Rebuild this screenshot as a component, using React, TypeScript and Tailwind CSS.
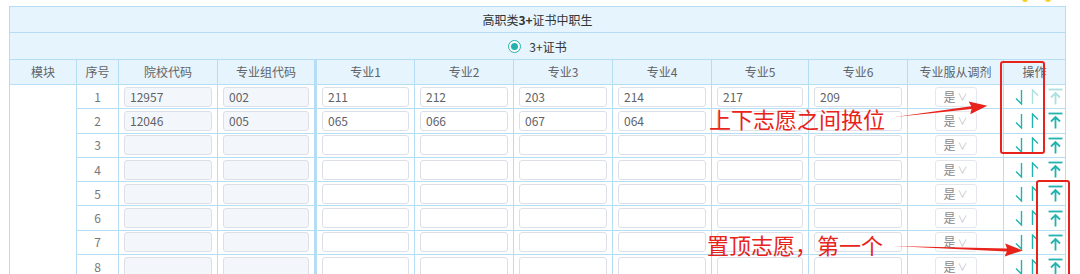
import React from "react";

const rows = [
  { school: "12957", group: "002", majors: ["211", "212", "203", "214", "217", "209"] },
  { school: "12046", group: "005", majors: ["065", "066", "067", "064", "", ""] },
  { school: "", group: "", majors: ["", "", "", "", "", ""] },
  { school: "", group: "", majors: ["", "", "", "", "", ""] },
  { school: "", group: "", majors: ["", "", "", "", "", ""] },
  { school: "", group: "", majors: ["", "", "", "", "", ""] },
  { school: "", group: "", majors: ["", "", "", "", "", ""] },
  { school: "", group: "", majors: ["", "", "", "", "", ""] },
];

const majorHeads = ["专业1", "专业2", "专业3", "专业4", "专业5", "专业6"];

function Field({ value, gray }: { value: string; gray?: boolean }) {
  return (
    <div
      className={
        "mx-auto h-[20px] w-full rounded-[3px] border border-[#dcdfe6] px-[5px] text-left text-[12px] leading-[18px] text-[#606266] " +
        (gray ? "bg-[#f3f7fb]" : "bg-white")
      }
    >
      {value}
    </div>
  );
}

function DownIcon({ faded }: { faded?: boolean }) {
  return (
    <svg width="10" height="16" viewBox="0 0 10 16" fill="none" stroke={faded ? "#a9e2df" : "#23b3ae"} strokeWidth="1.4">
      <path d="M7.5 1 V15 L2 9.5" />
    </svg>
  );
}

function UpIcon({ faded }: { faded?: boolean }) {
  return (
    <svg width="10" height="16" viewBox="0 0 10 16" fill="none" stroke={faded ? "#a9e2df" : "#23b3ae"} strokeWidth="1.4">
      <path d="M2.5 15 V1 L8 6.5" />
    </svg>
  );
}

function TopIcon({ faded }: { faded?: boolean }) {
  return (
    <svg width="15" height="17" viewBox="0 0 15 17" fill="none" stroke={faded ? "#a9e2df" : "#23b3ae"} strokeWidth="1.8">
      <path d="M0.5 1.5 H14.5" />
      <path d="M7.5 5 V16.5 M3 9.5 L7.5 5 L12 9.5" />
    </svg>
  );
}

function Arrow({ width }: { width: number }) {
  return (
    <svg width={width} height="16" viewBox={`0 0 ${width} 16`}>
      <polygon points={`0,8 ${width - 16},6.6 ${width - 18},1.5 ${width},8 ${width - 18},14.5 ${width - 16},9.4`} fill="#e8231b" />
    </svg>
  );
}

export default function App() {
  const cell = "border border-[#b5ddf3]";
  return (
    <div
      className="relative h-[274px] w-[1080px] overflow-hidden bg-white"
      style={{ fontFamily: '"Noto Sans CJK SC", "Noto Sans", sans-serif' }}
    >
      <div className="absolute left-[1022px] top-[-4px] h-[6px] w-[6px] rounded-full bg-[#f5d020]" />
      <div className="absolute left-[1045px] top-[-4px] h-[6px] w-[6px] rounded-full bg-[#f5d020]" />

      <div className="pl-[9px] pt-[6px]">
        <table className="w-[1056px] table-fixed border-collapse text-center text-[12px] text-[#606266]">
          <colgroup>
            <col className="w-[67px]" />
            <col className="w-[42px]" />
            <col className="w-[99px]" />
            <col className="w-[98px]" />
            <col className="w-[99px]" />
            <col className="w-[99px]" />
            <col className="w-[99px]" />
            <col className="w-[99px]" />
            <col className="w-[97px]" />
            <col className="w-[99px]" />
            <col className="w-[96px]" />
            <col className="w-[62px]" />
          </colgroup>
          <thead className="bg-[#e6f4fd]">
            <tr className="h-[26px]">
              <th colSpan={12} className={cell + " font-normal text-[#333]"}>
                高职类<b className="font-bold">3+</b>证书中职生
              </th>
            </tr>
            <tr className="h-[27px]">
              <th colSpan={12} className={cell + " font-normal"}>
                <span className="inline-flex items-center gap-[8px] text-[#333]">
                  <span className="flex h-[13px] w-[13px] items-center justify-center rounded-full border border-[#23b3ae] bg-white">
                    <span className="h-[7px] w-[7px] rounded-full bg-[#23b3ae]" />
                  </span>
                  3+证书
                </span>
              </th>
            </tr>
            <tr className="h-[25px]">
              <th className={cell + " font-normal"}>模块</th>
              <th className={cell + " font-normal"}>序号</th>
              <th className={cell + " font-normal"}>院校代码</th>
              <th className={cell + " border-r-[3px] font-normal"}>专业组代码</th>
              {majorHeads.map((h) => (
                <th key={h} className={cell + " font-normal"}>
                  {h}
                </th>
              ))}
              <th className={cell + " font-normal"}>专业服从调剂</th>
              <th className={cell + " font-normal"}>操作</th>
            </tr>
          </thead>
          <tbody>
            {rows.map((r, i) => (
              <tr key={i} className="h-[24.3px]">
                {i === 0 && <td rowSpan={8} className={cell} />}
                <td className={cell + " text-[12px] text-[#777]"}>{i + 1}</td>
                <td className={cell + " px-[5px]"}>
                  <Field value={r.school} gray />
                </td>
                <td className={cell + " border-r-[3px] px-[5px]"}>
                  <Field value={r.group} gray />
                </td>
                {r.majors.map((m, j) => (
                  <td key={j} className={cell + " px-[5px]"}>
                    <Field value={m} />
                  </td>
                ))}
                <td className={cell}>
                  <div className="mx-auto flex h-[20px] w-[42px] items-center justify-center gap-[2px] rounded-[3px] border border-[#e4e7ed] text-[12px] text-[#888]">
                    是<span className="text-[10px] text-[#c0c4cc]">∨</span>
                  </div>
                </td>
                <td className={cell}>
                  <div className="flex items-center pl-[10px]">
                    <DownIcon />
                    <span className="w-[6px]" />
                    <UpIcon faded={i === 0} />
                    <span className="w-[8px]" />
                    <TopIcon faded={i === 0} />
                  </div>
                </td>
              </tr>
            ))}
          </tbody>
        </table>
      </div>

      {/* annotations */}
      <div className="absolute left-[1000px] top-[61px] h-[93px] w-[45px] rounded-[3px] border-2 border-[#e8231b]" />
      <div className="absolute left-[1036px] top-[180px] h-[110px] w-[34px] rounded-[3px] border-2 border-[#e8231b]" />

      <div className="absolute left-[709px] top-[107px] text-[22px] leading-[22px] text-[#e8231b]">上下志愿之间换位</div>
      <div className="absolute left-[895px] top-[109px] origin-left -rotate-[7deg]">
        <Arrow width={93} />
      </div>

      <div className="absolute left-[707px] top-[233px] text-[22px] leading-[22px] text-[#e8231b]">置顶志愿，第一个</div>
      <div className="absolute left-[893px] top-[238px] origin-left rotate-[2deg]">
        <Arrow width={130} />
      </div>
    </div>
  );
}
